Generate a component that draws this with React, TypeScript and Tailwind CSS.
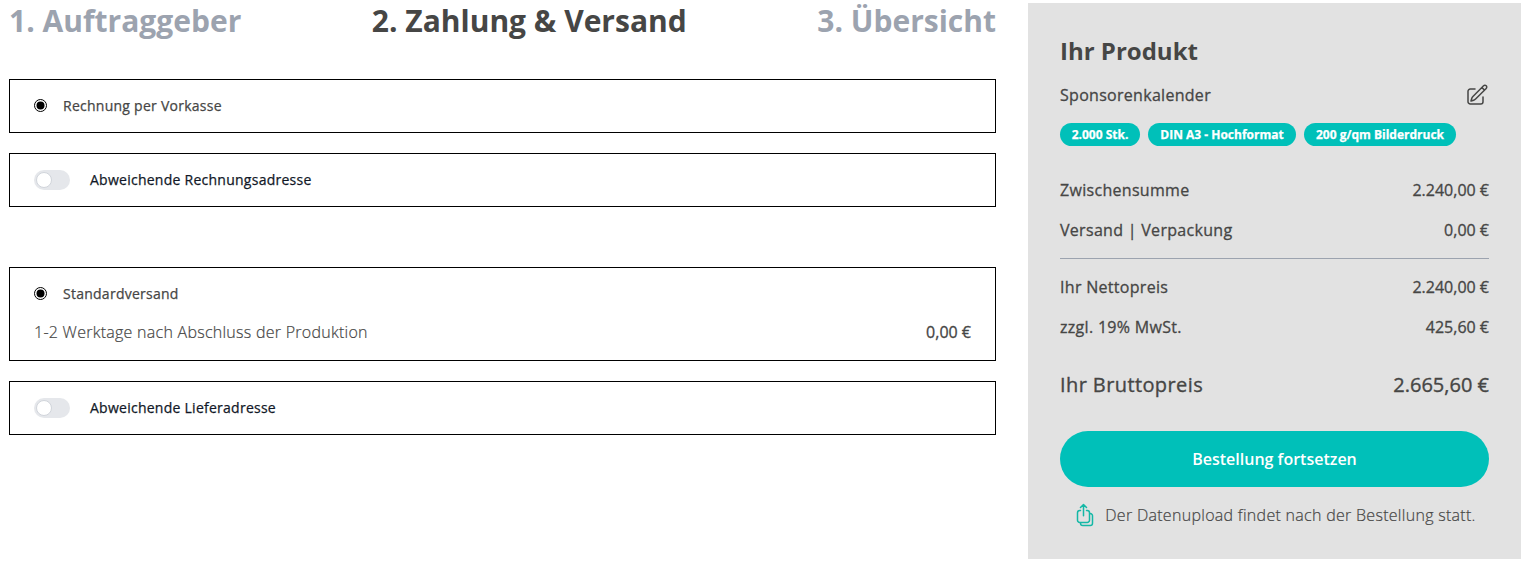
import React from "react";

function Step({ children, active }: { children: React.ReactNode; active?: boolean }) {
  return (
    <h2 className={active ? "text-[30px] leading-9 font-bold text-[#464645]" : "text-[30px] leading-9 font-bold text-[#9ca3af]"}>
      {children}
    </h2>
  );
}

function Radio() {
  return (
    <svg className="mb-px size-[13px] shrink-0" viewBox="0 0 13 13">
      <circle cx="6.5" cy="6.5" r="6" fill="#fff" stroke="#000" />
      <circle cx="6.5" cy="6.5" r="4" fill="#000" />
    </svg>
  );
}

function RadioLabel({ children }: { children: React.ReactNode }) {
  return <span className="ml-4 text-sm font-medium tracking-[0.255px] [-webkit-text-stroke:0.25px]">{children}</span>;
}

function Toggle({ label }: { label: string }) {
  return (
    <div className="flex h-[54px] items-center border border-black px-6">
      <span className="flex h-5 w-9 items-center rounded-full bg-[#e5e7eb] px-0.5">
        <span className="size-4 rounded-full border border-[#d1d5db] bg-white" />
      </span>
      <span className="ml-5 text-sm font-medium tracking-[0.255px] text-[#111827] [-webkit-text-stroke:0.25px]">{label}</span>
    </div>
  );
}

function Row({ label, value }: { label: string; value: string }) {
  return (
    <div className="flex h-10 items-center justify-between font-medium [-webkit-text-stroke:0.3px]">
      <span className="tracking-[0.3px]">{label}</span>
      <span>{value}</span>
    </div>
  );
}

function Badge({ children, className }: { children: React.ReactNode; className: string }) {
  return (
    <span className={`flex h-[23px] items-center justify-center whitespace-nowrap rounded-full bg-[#00c0b9] text-xs font-bold text-white [-webkit-text-stroke:0.25px] ${className}`}>
      {children}
    </span>
  );
}

export default function App() {
  return (
    <div className="flex h-[565px] items-start overflow-hidden bg-white pt-[3px] pl-[9px] font-['Open_Sans',sans-serif] text-base text-[#464645]">
      <main className="w-[987px]">
        <div className="flex justify-between">
          <Step>1. Auftraggeber</Step>
          <Step active>2. Zahlung &amp; Versand</Step>
          <Step>3. Übersicht</Step>
        </div>
        <div className="mt-10 flex h-[54px] items-center border border-black px-6">
          <Radio />
          <RadioLabel>Rechnung per Vorkasse</RadioLabel>
        </div>
        <div className="mt-5">
          <Toggle label="Abweichende Rechnungsadresse" />
        </div>
        <div className="mt-[60px] h-[94px] border border-black px-6 pt-4">
          <div className="flex h-5 items-center">
            <Radio />
            <RadioLabel>Standardversand</RadioLabel>
          </div>
          <div className="mt-4 flex justify-between">
            <span className="font-light tracking-[0.262px] [-webkit-text-stroke:0.2px]">1-2 Werktage nach Abschluss der Produktion</span>
            <span className="font-medium [-webkit-text-stroke:0.3px]">0,00 €</span>
          </div>
        </div>
        <div className="mt-5">
          <Toggle label="Abweichende Lieferadresse" />
        </div>
      </main>
      <aside className="ml-8 h-[556px] w-[493px] bg-[#e2e2e2] px-8 pt-8">
        <h3 className="text-2xl font-bold">Ihr Produkt</h3>
        <div className="mt-4 flex h-6 items-center justify-between font-medium">
          <span className="tracking-[0.29px] [-webkit-text-stroke:0.3px]">Sponsorenkalender</span>
          <svg className="size-6" viewBox="0 0 24 24" fill="none" stroke="currentColor" strokeWidth="1.5" strokeLinecap="round" strokeLinejoin="round">
            <path d="m16.862 4.487 1.687-1.688a1.875 1.875 0 1 1 2.652 2.652L10.582 16.07a4.5 4.5 0 0 1-1.897 1.13L6 18l.8-2.685a4.5 4.5 0 0 1 1.13-1.897l8.932-8.931Zm0 0L19.5 7.125M18 14v4.75A2.25 2.25 0 0 1 15.75 21H5.25A2.25 2.25 0 0 1 3 18.75V8.25A2.25 2.25 0 0 1 5.25 6H10" />
          </svg>
        </div>
        <div className="mt-4 flex gap-2">
          <Badge className="w-20">2.000 Stk.</Badge>
          <Badge className="w-[148px]">DIN A3 - Hochformat</Badge>
          <Badge className="w-[152px]">200 g/qm Bilderdruck</Badge>
        </div>
        <div className="mt-6">
          <Row label="Zwischensumme" value="2.240,00 €" />
          <Row label="Versand | Verpackung" value="0,00 €" />
        </div>
        <hr className="mt-2 mb-2 border-[#9ca3af]" />
        <Row label="Ihr Nettopreis" value="2.240,00 €" />
        <Row label="zzgl. 19% MwSt." value="425,60 €" />
        <div className="mt-6 flex justify-between text-xl font-medium [-webkit-text-stroke:0.35px]">
          <span className="tracking-[0.4px]">Ihr Bruttopreis</span>
          <span>2.665,60 €</span>
        </div>
        <button className="mt-8 h-14 w-full rounded-full bg-[#00c0b9] font-semibold text-white">Bestellung fortsetzen</button>
        <div className="mt-4 flex h-6 items-center justify-center font-light">
          <svg className="mr-2 size-6 text-[#14b8a6]" viewBox="0 0 24 24" fill="none" stroke="currentColor" strokeWidth="1.5" strokeLinecap="round" strokeLinejoin="round">
            <path d="M7.5 7.5h-.75A2.25 2.25 0 0 0 4.5 9.75v7.5a2.25 2.25 0 0 0 2.25 2.25h7.5a2.25 2.25 0 0 0 2.25-2.25v-7.5a2.25 2.25 0 0 0-2.25-2.25h-.75m0-3-3-3m0 0-3 3m3-3v11.25m6-2.25h.75a2.25 2.25 0 0 1 2.25 2.25v7.5a2.25 2.25 0 0 1-2.25 2.25h-7.5a2.25 2.25 0 0 1-2.25-2.25v-.75" />
          </svg>
          <span className="tracking-[0.29px] [-webkit-text-stroke:0.2px]">Der Datenupload findet nach der Bestellung statt.</span>
        </div>
      </aside>
    </div>
  );
}
